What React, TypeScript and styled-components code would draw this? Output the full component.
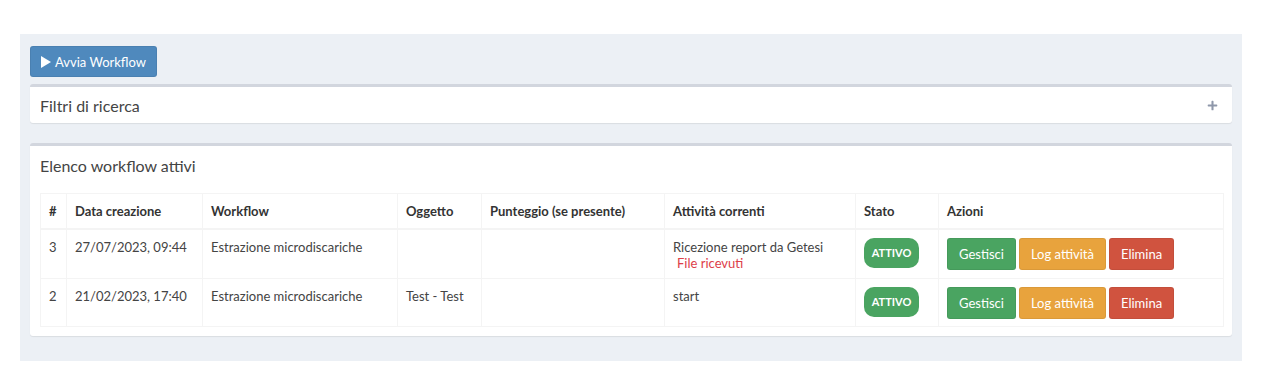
import { createGlobalStyle, styled } from "styled-components"
import { FaPlus } from "react-icons/fa"

const GlobalStyle = createGlobalStyle`
  body {
    margin: 0;
    background: #ffffff;
    font-family: Lato, "Liberation Sans", sans-serif;
    font-size: 13px;
    color: #444;
  }
`

type Row = {
  id: number
  created: string
  workflow: string
  subject: string
  score: string
  activity: string
  note?: string
}

const rows: Row[] = [
  {
    id: 3,
    created: "27/07/2023, 09:44",
    workflow: "Estrazione microdiscariche",
    subject: "",
    score: "",
    activity: "Ricezione report da Getesi",
    note: "File ricevuti",
  },
  {
    id: 2,
    created: "21/02/2023, 17:40",
    workflow: "Estrazione microdiscariche",
    subject: "Test - Test",
    score: "",
    activity: "start",
  },
]

const columns = [
  { title: "#", width: 26 },
  { title: "Data creazione", width: 136 },
  { title: "Workflow", width: 195 },
  { title: "Oggetto", width: 84 },
  { title: "Punteggio (se presente)", width: 183 },
  { title: "Attività correnti", width: 191 },
  { title: "Stato", width: 83 },
  { title: "Azioni", width: 285 },
]

const btnColors = {
  primary: "#4f89bd",
  success: "#4aa461",
  warning: "#e8a33d",
  danger: "#d0533f",
}

const S = {
  Page: styled.div`
    padding: 34px 0 0 20px;
  `,
  Content: styled.div`
    width: 1222px;
    box-sizing: border-box;
    background: #ecf0f5;
    padding: 12px 10px 25px 10px;
  `,
  Toolbar: styled.div`
    display: flex;
    margin-bottom: 7px;
  `,
  Button: styled.button<{ $variant: keyof typeof btnColors }>`
    display: inline-flex;
    align-items: center;
    gap: 4px;
    height: ${({ $variant }) => ($variant === "primary" ? "31px" : "32px")};
    padding: 0 ${({ $variant }) => ($variant === "primary" ? "10px" : "11px")};
    border: 1px solid rgba(0, 0, 0, 0.06);
    border-radius: 3px;
    background: ${({ $variant }) => btnColors[$variant]};
    color: #fff;
    font-family: Lato, "Liberation Sans", sans-serif;
    font-size: 13px;
    cursor: pointer;
  `,
  Box: styled.div<{ $gap?: number }>`
    background: #fff;
    border-top: 3px solid #d2d6de;
    border-radius: 3px;
    box-shadow: 0 1px 1px rgba(0, 0, 0, 0.08);
    margin-bottom: ${({ $gap }) => $gap ?? 0}px;
  `,
  BoxHeader: styled.div<{ $height: number }>`
    display: flex;
    align-items: center;
    justify-content: space-between;
    height: ${({ $height }) => $height}px;
    padding: 0 14px 0 10px;
  `,
  BoxTitle: styled.h3`
    margin: 0;
    font-size: 16px;
    font-weight: 400;
    color: #444;
  `,
  ToolIcon: styled(FaPlus)`
    color: #8e97aa;
    width: 11px;
    height: 11px;
  `,
  BoxBody: styled.div`
    padding: 9px 10px 9px;
  `,
  Table: styled.table`
    width: 100%;
    table-layout: fixed;
    border-collapse: collapse;
    border: 1px solid #f4f4f4;
  `,
  Th: styled.th`
    text-align: left;
    font-weight: 700;
    color: #333;
    height: 34px;
    padding: 0 8px;
    border: 1px solid #f4f4f4;
    border-bottom-width: 2px;
  `,
  Td: styled.td`
    vertical-align: top;
    padding: 8px 8px 7px;
    line-height: 18px;
    border: 1px solid #f4f4f4;
    color: #444;
  `,
  Note: styled.div`
    color: #dd4049;
    padding-left: 4px;
    line-height: 15px;
  `,
  Badge: styled.span`
    display: flex;
    align-items: center;
    justify-content: center;
    width: 55px;
    height: 30px;
    border-radius: 10px;
    background: #4aa461;
    color: #fff;
    font-size: 11px;
    font-weight: 700;
  `,
  Actions: styled.div`
    display: flex;
    gap: 3px;
  `,
}

const PlayIcon = () => (
  <svg width="10" height="12" viewBox="0 0 10 12">
    <polygon points="0,0 10,6 0,12" fill="#fff" />
  </svg>
)

export default function App() {
  return (
    <>
      <GlobalStyle />
      <S.Page>
        <S.Content>
          <S.Toolbar>
            <S.Button $variant="primary">
              <PlayIcon /> Avvia Workflow
            </S.Button>
          </S.Toolbar>
          <S.Box $gap={20}>
            <S.BoxHeader $height={36}>
              <S.BoxTitle>Filtri di ricerca</S.BoxTitle>
              <S.ToolIcon />
            </S.BoxHeader>
          </S.Box>
          <S.Box>
            <S.BoxHeader $height={38}>
              <S.BoxTitle>Elenco workflow attivi</S.BoxTitle>
            </S.BoxHeader>
            <S.BoxBody>
              <S.Table>
                <colgroup>
                  {columns.map((c) => (
                    <col key={c.title} style={{ width: c.width }} />
                  ))}
                </colgroup>
                <thead>
                  <tr>
                    {columns.map((c) => (
                      <S.Th key={c.title}>{c.title}</S.Th>
                    ))}
                  </tr>
                </thead>
                <tbody>
                  {rows.map((r) => (
                    <tr key={r.id}>
                      <S.Td>{r.id}</S.Td>
                      <S.Td>{r.created}</S.Td>
                      <S.Td>{r.workflow}</S.Td>
                      <S.Td>{r.subject}</S.Td>
                      <S.Td>{r.score}</S.Td>
                      <S.Td>
                        {r.activity}
                        {r.note && <S.Note>{r.note}</S.Note>}
                      </S.Td>
                      <S.Td>
                        <S.Badge>ATTIVO</S.Badge>
                      </S.Td>
                      <S.Td>
                        <S.Actions>
                          <S.Button $variant="success">Gestisci</S.Button>
                          <S.Button $variant="warning">Log attività</S.Button>
                          <S.Button $variant="danger">Elimina</S.Button>
                        </S.Actions>
                      </S.Td>
                    </tr>
                  ))}
                </tbody>
              </S.Table>
            </S.BoxBody>
          </S.Box>
        </S.Content>
      </S.Page>
    </>
  )
}
